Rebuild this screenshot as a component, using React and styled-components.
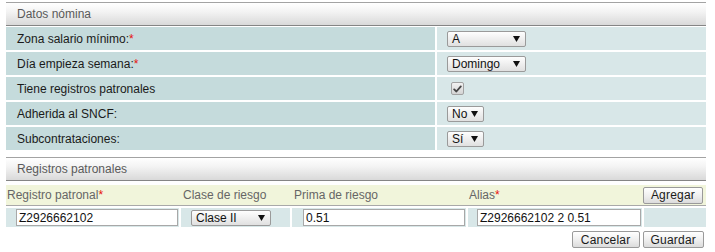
import React from "react";
import styled, { createGlobalStyle } from "styled-components";

const Global = createGlobalStyle`
  html, body { margin: 0; padding: 0; background: #fff; }
  body { font-family: "Liberation Sans", Arial, sans-serif; font-size: 12px; color: #1a1a1a; }
`;

const Page = styled.div`
  width: 700px;
  padding: 2px 0 0 6px;
  display: flex;
  flex-direction: column;
`;

const SectionHeader = styled.div`
  box-sizing: border-box;
  height: 24px;
  margin-top: ${p => p.$mt || 0}px;
  border-top: 1px solid #a3a3a3;
  border-bottom: 1px solid #858585;
  background: linear-gradient(#ffffff, #f3f3f3 40%, #d9d9d9);
  display: flex;
  align-items: center;
  padding-left: 11px;
  color: #5a5a5a;
  font-size: 12px;
`;

const FormGrid = styled.div`
  margin-top: 1px;
  display: grid;
  grid-template-columns: 429px 269px;
  grid-auto-rows: 23px;
  gap: 2px;
`;

const LabelCell = styled.div`
  background: #c5dbdc;
  display: flex;
  align-items: center;
  padding-left: 11px;
  color: #1a1a1a;
`;

const ValueCell = styled.div`
  background: #d8e7e8;
  display: flex;
  align-items: center;
  padding-left: 10px;
`;

const Req = styled.span`
  color: #e8120c;
`;

const SelectBox = styled.div`
  box-sizing: border-box;
  width: ${p => p.$w}px;
  height: 16px;
  padding: 0 5px 0 4px;
  display: flex;
  align-items: center;
  justify-content: space-between;
  border: 1px solid #9a9a9a;
  border-radius: 2px;
  background: linear-gradient(#fefefe, #ececec 60%, #e0e0e0);
  color: #111;
  font-size: 12px;
  line-height: 14px;
  white-space: nowrap;
`;

const Arrow = () => (
  <svg width="7" height="6" viewBox="0 0 7 6">
    <polygon points="0,0 7,0 3.5,6" fill="#111" />
  </svg>
);

const Select = ({ w, value }) => (
  <SelectBox $w={w}>
    <span>{value}</span>
    <Arrow />
  </SelectBox>
);

const CheckBox = styled.span`
  box-sizing: border-box;
  width: 13px;
  height: 13px;
  margin-left: 4px;
  border: 1px solid #a2a2a2;
  border-radius: 2px;
  background: linear-gradient(#f2f2f2, #d4d4d4);
  display: flex;
  align-items: center;
  justify-content: center;
`;

const TableHead = styled.div`
  margin-top: 4px;
  box-sizing: border-box;
  height: 21px;
  background: #f1f5db;
  border-bottom: 1px solid #a9a9a9;
  display: grid;
  grid-template-columns: 173px 109px 174px 174px 62px;
  column-gap: 2px;
  align-items: center;
`;

const HeadCell = styled.div`
  color: #666;
  font-size: 12px;
  padding-left: ${p => p.$pl ?? 1}px;
  display: flex;
  justify-content: ${p => (p.$end ? "flex-end" : "flex-start")};
  padding-right: ${p => (p.$end ? 3 : 0)}px;
`;

const DataRow = styled.div`
  margin-top: 2px;
  display: grid;
  grid-template-columns: 173px 109px 174px 174px 62px;
  column-gap: 2px;
  height: 19px;
`;

const DataCell = styled.div`
  background: #d8e7e8;
  display: flex;
  align-items: center;
  padding: 0 ${p => p.$pr ?? 1}px 0 ${p => p.$pl ?? 10}px;
`;

const TextInput = styled.div`
  box-sizing: border-box;
  width: 100%;
  height: 17px;
  background: #fff;
  border: 1px solid #a8a8a8;
  padding-left: 2px;
  display: flex;
  align-items: center;
  font-size: 12px;
  color: #111;
  white-space: nowrap;
`;

const Button = styled.button`
  box-sizing: border-box;
  height: 17px;
  ${p => (p.$w ? `width: ${p.$w}px;` : "")}
  padding: 0 7px;
  margin: 0;
  border: 1px solid #9a9a9a;
  border-radius: 2px;
  background: linear-gradient(#ffffff, #eeeeee 55%, #dcdcdc);
  font-family: "Liberation Sans", Arial, sans-serif;
  font-size: 12px;
  color: #1a1a1a;
  line-height: 14px;
  letter-spacing: 0.2px;
`;

const Actions = styled.div`
  margin-top: 4px;
  display: flex;
  justify-content: flex-end;
  gap: 3px;
  padding-right: 2px;
`;

const rows = [
  { label: "Zona salario mínimo:", req: true, control: <Select w={79} value="A" /> },
  { label: "Día empieza semana:", req: true, control: <Select w={79} value="Domingo" /> },
  {
    label: "Tiene registros patronales",
    control: (
      <CheckBox>
        <svg width="9" height="8" viewBox="0 0 9 8">
          <path d="M1.2 4.4 L3.4 6.5 L7.8 1.4" fill="none" stroke="#454545" strokeWidth="1.8" strokeLinecap="round" strokeLinejoin="round" />
        </svg>
      </CheckBox>
    ),
  },
  { label: "Adherida al SNCF:", control: <Select w={37} value="No" /> },
  { label: "Subcontrataciones:", control: <Select w={37} value="Sí" /> },
];

export default function App() {
  return (
    <>
      <Global />
      <Page>
        <SectionHeader>Datos nómina</SectionHeader>
        <FormGrid>
          {rows.map(r => (
            <React.Fragment key={r.label}>
              <LabelCell>
                {r.label}
                {r.req && <Req>*</Req>}
              </LabelCell>
              <ValueCell>{r.control}</ValueCell>
            </React.Fragment>
          ))}
        </FormGrid>

        <SectionHeader $mt={7}>Registros patronales</SectionHeader>
        <TableHead>
          <HeadCell>
            Registro patronal<Req>*</Req>
          </HeadCell>
          <HeadCell $pl={2}>Clase de riesgo</HeadCell>
          <HeadCell $pl={2}>Prima de riesgo</HeadCell>
          <HeadCell $pl={1}>
            Alias<Req>*</Req>
          </HeadCell>
          <HeadCell $end>
            <Button>Agregar</Button>
          </HeadCell>
        </TableHead>
        <DataRow>
          <DataCell>
            <TextInput>Z2926662102</TextInput>
          </DataCell>
          <DataCell>
            <Select w={80} value="Clase II" />
          </DataCell>
          <DataCell $pl={11}>
            <TextInput>0.51</TextInput>
          </DataCell>
          <DataCell $pl={9}>
            <TextInput>Z2926662102 2 0.51</TextInput>
          </DataCell>
          <DataCell />
        </DataRow>
        <Actions>
          <Button $w={68}>Cancelar</Button>
          <Button>Guardar</Button>
        </Actions>
      </Page>
    </>
  );
}
